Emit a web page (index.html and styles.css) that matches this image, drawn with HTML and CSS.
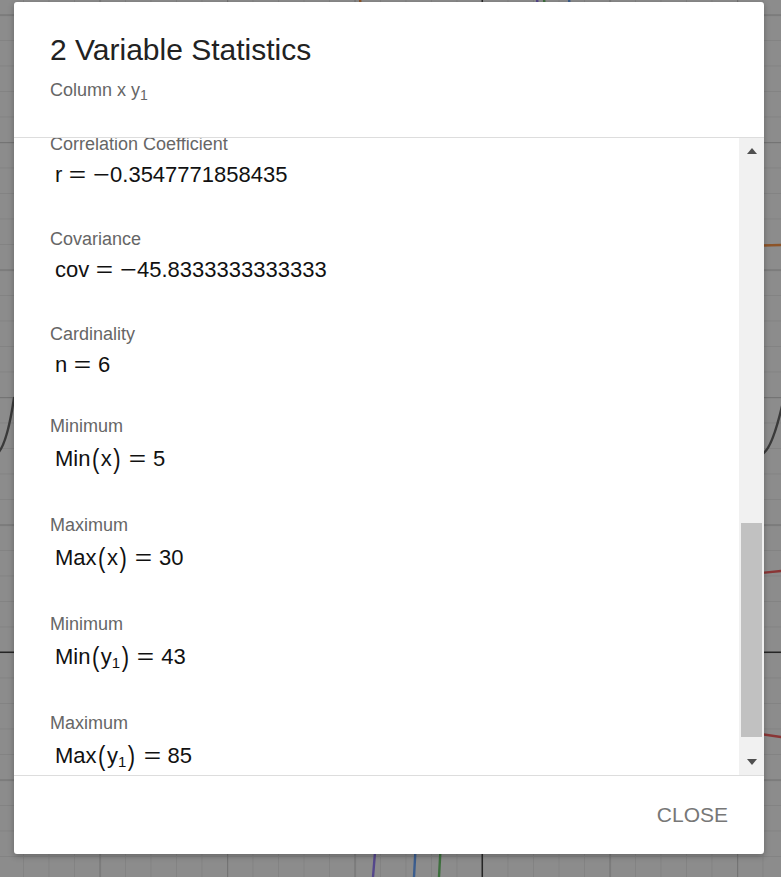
FILE: index.html
```html
<!DOCTYPE html>
<html lang="en">
<head>
<meta charset="utf-8">
<title>2 Variable Statistics</title>
<link rel="stylesheet" href="styles.css">
</head>
<body>
<div class="backdrop">
  <svg class="graph" width="781" height="877" viewBox="0 0 781 877" xmlns="http://www.w3.org/2000/svg">
    <defs>
      <pattern id="minor" patternUnits="userSpaceOnUse" x="23" y="14.5" width="25.5" height="25.5">
        <rect x="0" y="0" width="25.5" height="1" fill="#838383"/>
        <rect x="0" y="0" width="1" height="25.5" fill="#838383"/>
      </pattern>
      <pattern id="major" patternUnits="userSpaceOnUse" x="99.5" y="14.5" width="127.5" height="127.5">
        <rect x="0" y="0" width="127.5" height="1.2" fill="#747474"/>
        <rect x="0" y="0" width="1.2" height="127.5" fill="#747474"/>
      </pattern>
    </defs>
    <rect width="781" height="877" fill="#8c8c8c"/>
    <rect width="781" height="877" fill="url(#minor)"/>
    <rect width="781" height="877" fill="url(#major)"/>
    <rect x="481.5" y="0" width="1.5" height="877" fill="#262626"/>
    <rect x="0" y="651.5" width="781" height="1.5" fill="#262626"/>
    <g fill="none" stroke-width="2.4" stroke-linecap="round">
      <path d="M-6 456 Q 6 452 14 398" stroke="#3a3a3a"/>
      <path d="M762 454 Q 772 450 783 402" stroke="#3a3a3a"/>
      <path d="M740 246 L 781 245" stroke="#8d5428"/>
      <path d="M740 575 L 781 571" stroke="#8a3636"/>
      <path d="M740 731 L 781 737" stroke="#8a3636"/>
      <path d="M376 840 L 373 877" stroke="#55478c"/>
      <path d="M416 840 L 414 877" stroke="#3b5d8e"/>
      <path d="M441 840 L 439 877" stroke="#3d6f3d"/>
      <path d="M360 -2 L 361 12" stroke="#8d5428"/>
      <path d="M537 -2 L 538 12" stroke="#55478c"/>
      <path d="M544 -2 L 545 12" stroke="#3d6f3d"/>
      <path d="M569 -2 L 570 12" stroke="#3b5d8e"/>
    </g>
  </svg>
</div>

<div class="overlay">
  <div class="dialog" role="dialog" aria-labelledby="dlg-title">
    <header class="dlg-head">
      <h1 class="title" id="dlg-title">2 Variable Statistics</h1>
      <div class="subtitle">Column x y<sub class="sub">1</sub></div>
    </header>

    <div class="dlg-body">
      <div class="viewport">
        <div class="list">
          <div class="stat">
            <div class="label">Correlation Coefficient</div>
            <div class="math">r<span class="rel">=</span><span class="neg">−</span>0.3547771858435</div>
          </div>
          <div class="stat">
            <div class="label">Covariance</div>
            <div class="math">cov<span class="rel">=</span><span class="neg">−</span>45.8333333333333</div>
          </div>
          <div class="stat stat-short">
            <div class="label">Cardinality</div>
            <div class="math">n<span class="rel">=</span>6</div>
          </div>
          <div class="stat">
            <div class="label">Minimum</div>
            <div class="math math-tall">Min<span class="paren">(</span>x<span class="paren">)</span><span class="rel">=</span>5</div>
          </div>
          <div class="stat">
            <div class="label">Maximum</div>
            <div class="math math-tall">Max<span class="paren">(</span>x<span class="paren">)</span><span class="rel">=</span>30</div>
          </div>
          <div class="stat">
            <div class="label">Minimum</div>
            <div class="math math-tall">Min<span class="paren">(</span>y<sub class="msub">1</sub><span class="paren">)</span><span class="rel">=</span>43</div>
          </div>
          <div class="stat">
            <div class="label">Maximum</div>
            <div class="math math-tall">Max<span class="paren">(</span>y<sub class="msub">1</sub><span class="paren">)</span><span class="rel">=</span>85</div>
          </div>
        </div>
      </div>

      <div class="scrollbar" aria-hidden="true">
        <div class="sb-btn sb-up"><span class="tri tri-up"></span></div>
        <div class="sb-track"><div class="sb-thumb"></div></div>
        <div class="sb-btn sb-down"><span class="tri tri-down"></span></div>
      </div>
    </div>

    <footer class="dlg-foot">
      <button class="close-btn" type="button">CLOSE</button>
    </footer>
  </div>
</div>
</body>
</html>
```

FILE: styles.css
```css
* {
  box-sizing: border-box;
}

html, body {
  margin: 0;
  padding: 0;
  width: 781px;
  height: 877px;
  overflow: hidden;
}

body {
  font-family: "Liberation Sans", Arial, sans-serif;
  background: #8c8c8c;
}

/* graphics view behind the modal (a free canvas) */
.backdrop {
  position: fixed;
  inset: 0;
}

.graph {
  display: block;
}

/* modal layer */
.overlay {
  position: fixed;
  inset: 0;
  display: flex;
  padding: 2px 17px 23px 14px;
}

.dialog {
  flex: 1;
  display: flex;
  flex-direction: column;
  background: #ffffff;
  border-radius: 3px;
  box-shadow: 0 2px 6px rgba(0, 0, 0, 0.28);
  overflow: hidden;
}

/* header */
.dlg-head {
  height: 136px;
  padding: 30px 36px 0 36px;
  border-bottom: 1px solid #dddddd;
  flex: none;
}

.title {
  margin: 0;
  font-size: 30px;
  line-height: 36px;
  font-weight: 400;
  color: #222222;
}

.subtitle {
  margin-top: 11px;
  font-size: 18px;
  line-height: 22px;
  color: #666666;
}

.sub {
  font-size: 14px;
  line-height: 0;
  vertical-align: -4px;
}

/* scrolling body */
.dlg-body {
  flex: 1;
  display: flex;
  min-height: 0;
}

.viewport {
  flex: 1;
  overflow: hidden;
}

.list {
  margin-top: -4px;
  padding-left: 36px;
}

.stat {
  padding-bottom: 39px;
}

.stat-short {
  padding-bottom: 36px;
}

.label {
  font-size: 18px;
  line-height: 20px;
  color: #666666;
}

.math {
  margin-top: 6px;
  padding-left: 5px;
  font-family: "Liberation Sans", Arial, sans-serif;
  font-size: 22px;
  line-height: 30px;
  color: #111111;
  white-space: nowrap;
}

.math-tall {
  padding-top: 2px;
  padding-bottom: 2px;
}

.rel {
  display: inline-block;
  margin: 0 9px;
  transform: scaleX(1.35);
}

.neg {
  display: inline-block;
  margin: 0 2px;
  transform: scaleX(1.3);
}

.paren {
  display: inline-block;
  margin: 0 1.5px;
  transform: scaleY(1.28);
}

.msub {
  font-size: 15px;
  line-height: 0;
  vertical-align: -4px;
}

/* scrollbar */
.scrollbar {
  width: 25px;
  flex: none;
  display: flex;
  flex-direction: column;
  background: #f1f1f1;
}

.sb-btn {
  height: 25px;
  flex: none;
  display: flex;
  justify-content: center;
}

.sb-up {
  align-items: flex-start;
  padding-top: 10px;
}

.sb-down {
  align-items: flex-start;
  padding-top: 9px;
}

.tri {
  width: 0;
  height: 0;
  border-left: 5.5px solid transparent;
  border-right: 5.5px solid transparent;
}

.tri-up {
  border-bottom: 6px solid #505050;
}

.tri-down {
  border-top: 6px solid #505050;
}

.sb-track {
  flex: 1;
  padding: 0 2px;
}

.sb-thumb {
  margin-top: 360px;
  height: 214px;
  background: #c1c1c1;
}

/* footer */
.dlg-foot {
  height: 79px;
  flex: none;
  border-top: 1px solid #dddddd;
  display: flex;
  align-items: center;
  justify-content: flex-end;
  padding-right: 36px;
}

.close-btn {
  font-family: "Liberation Sans", Arial, sans-serif;
  font-size: 21px;
  color: #777777;
  background: none;
  border: none;
  padding: 0;
  cursor: pointer;
}
```
